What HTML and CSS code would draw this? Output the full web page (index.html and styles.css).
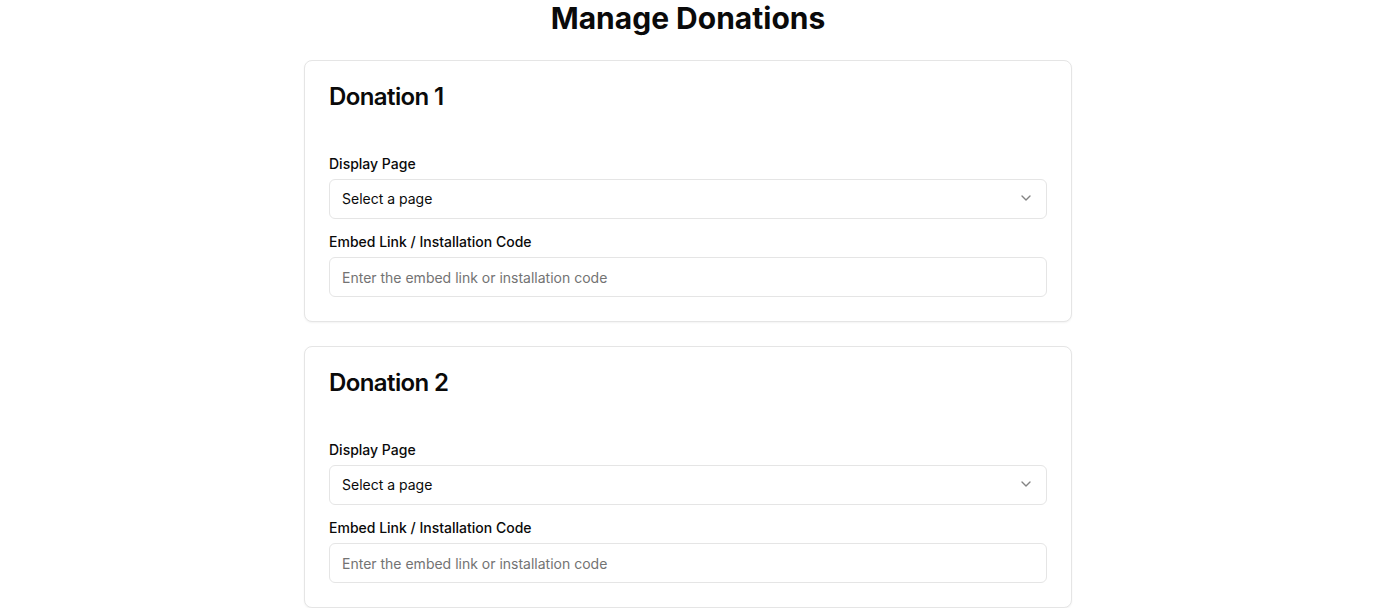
FILE: index.html
```html
<!DOCTYPE html>
<html lang="en">
<head>
<meta charset="utf-8">
<title>Manage Donations</title>
<link rel="stylesheet" href="styles.css">
</head>
<body>
<main class="page">
  <h1 class="page-title">Manage Donations</h1>
  <div class="cards">
    <section class="card">
      <div class="card-header"><h2 class="card-title">Donation 1</h2></div>
      <div class="card-content">
        <div class="field">
          <label class="label">Display Page</label>
          <button class="select" type="button">
            <span>Select a page</span>
            <svg class="chevron" width="16" height="16" viewBox="0 0 24 24" fill="none" stroke="currentColor" stroke-width="2" stroke-linecap="round" stroke-linejoin="round"><path d="m6 9 6 6 6-6"/></svg>
          </button>
        </div>
        <div class="field">
          <label class="label">Embed Link / Installation Code</label>
          <input class="input" type="text" placeholder="Enter the embed link or installation code">
        </div>
      </div>
    </section>
    <section class="card">
      <div class="card-header"><h2 class="card-title">Donation 2</h2></div>
      <div class="card-content">
        <div class="field">
          <label class="label">Display Page</label>
          <button class="select" type="button">
            <span>Select a page</span>
            <svg class="chevron" width="16" height="16" viewBox="0 0 24 24" fill="none" stroke="currentColor" stroke-width="2" stroke-linecap="round" stroke-linejoin="round"><path d="m6 9 6 6 6-6"/></svg>
          </button>
        </div>
        <div class="field">
          <label class="label">Embed Link / Installation Code</label>
          <input class="input" type="text" placeholder="Enter the embed link or installation code">
        </div>
      </div>
    </section>
  </div>
</main>
</body>
</html>
```

FILE: styles.css
```css
* { box-sizing: border-box; }
html, body { margin: 0; padding: 0; background: #fff; }
body {
  font-family: Inter, "Noto Sans", sans-serif;
  color: #0a0a0a;
}
.page {
  max-width: 768px;
  margin: 0 auto;
}
.page-title {
  margin: 0 0 24px;
  font-size: 30px;
  line-height: 36px;
  font-weight: 700;
  text-align: center;
  color: #0a0a0a;
}
.cards {
  display: flex;
  flex-direction: column;
  gap: 24px;
}
.card {
  border: 1px solid #e5e5e5;
  border-radius: 8px;
  background: #fff;
  box-shadow: 0 1px 2px rgba(0,0,0,0.05);
}
.card-header {
  padding: 24px;
}
.card-title {
  margin: 0;
  font-size: 24px;
  line-height: 24px;
  font-weight: 600;
  letter-spacing: -0.6px;
}
.card-content {
  padding: 21px 24px 24px;
  display: flex;
  flex-direction: column;
  gap: 13px;
}
.field {
  display: flex;
  flex-direction: column;
  gap: 5px;
}
.label {
  font-size: 14px;
  line-height: 20px;
  font-weight: 500;
  color: #0a0a0a;
}
.select, .input {
  height: 40px;
  width: 100%;
  border: 1px solid #e5e5e5;
  border-radius: 6px;
  background: #fff;
  padding: 0 12px;
  font-family: inherit;
  font-size: 14px;
  color: #0a0a0a;
}
.select {
  display: flex;
  align-items: center;
  justify-content: space-between;
  text-align: left;
  cursor: pointer;
  padding-bottom: 2px;
}
.chevron {
  opacity: 0.5;
  color: #0a0a0a;
}
.input::placeholder {
  color: #737373;
}
```
